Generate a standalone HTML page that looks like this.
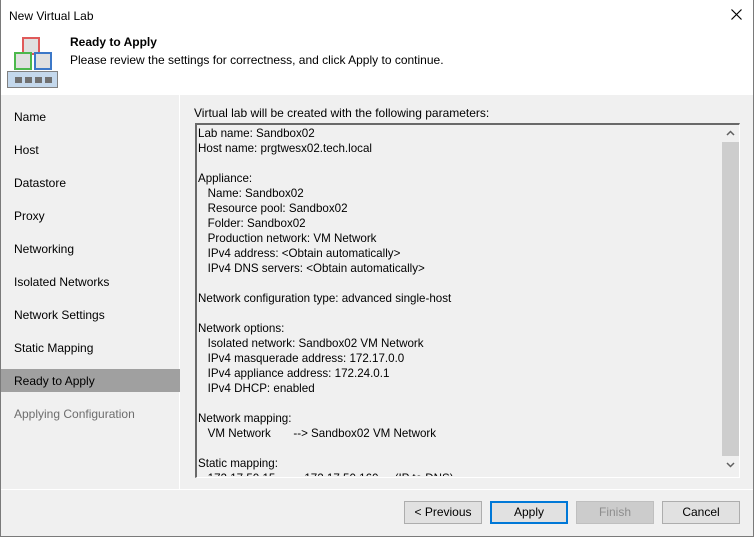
<!DOCTYPE html>
<html><head><style>
*{margin:0;padding:0;box-sizing:border-box}
body{width:754px;height:537px;background:#f0f0f0;font-family:"Liberation Sans",sans-serif;font-size:12px;color:#000;position:relative;overflow:hidden}
.win{position:absolute;left:0;top:0;width:754px;height:537px;border:1px solid #7a7a7a;border-top:none}
.abs{position:absolute;white-space:nowrap}
.hdr{position:absolute;left:1px;top:0;width:752px;height:95px;background:#fff}
.nav{position:absolute;left:1px;top:95px;width:179px;height:394px;background:#f0f0f0;border-right:1px solid #fff}
.sel{position:absolute;left:1px;top:369px;width:179px;height:23px;background:#a0a0a0}
.box{position:absolute;left:195px;top:123px;width:545px;height:355px;border:1px solid #fff;border-top:2px solid #696969;border-left:2px solid #696969;background:#f0f0f0}
.txt{position:absolute;left:1px;top:1px;line-height:15px;font-size:11.6px}
.btn{position:absolute;top:501px;width:78px;height:23px;border:1px solid #adadad;background:#e1e1e1;text-align:center;line-height:21px}
</style></head><body>
<div class="win"></div>
<div class="hdr"></div>
<div class="abs" style="left:9px;top:9px">New Virtual Lab</div>
<svg class="abs" style="left:731px;top:9px" width="11" height="11"><path d="M0.5 0.5L10.5 10.5M10.5 0.5L0.5 10.5" stroke="#000" stroke-width="1.2"/></svg>
<svg class="abs" style="left:7px;top:37px" width="52" height="52">
<rect x="16" y="1" width="16" height="16" fill="#e0e0e0" stroke="#e05a5a" stroke-width="2"/>
<rect x="8" y="16" width="16" height="16" fill="#e0e0e0" stroke="#4cb84c" stroke-width="2"/>
<rect x="28" y="16" width="16" height="16" fill="#e0e0e0" stroke="#3c78c8" stroke-width="2"/>
<rect x="0.5" y="34.5" width="50" height="16" fill="#c4d8ec" stroke="#808080"/>
<g fill="#707070"><rect x="8" y="40" width="7" height="6"/><rect x="18" y="40" width="7" height="6"/><rect x="28" y="40" width="7" height="6"/><rect x="38" y="40" width="7" height="6"/></g>
</svg>
<div class="abs" style="left:70px;top:35px;font-weight:bold">Ready to Apply</div>
<div class="abs" style="left:70px;top:53px">Please review the settings for correctness, and click Apply to continue.</div>
<div class="nav"></div>
<div class="sel"></div>
<div class="abs" style="left:14px;top:110px">Name</div>
<div class="abs" style="left:14px;top:143px">Host</div>
<div class="abs" style="left:14px;top:176px">Datastore</div>
<div class="abs" style="left:14px;top:209px">Proxy</div>
<div class="abs" style="left:14px;top:242px">Networking</div>
<div class="abs" style="left:14px;top:275px">Isolated Networks</div>
<div class="abs" style="left:14px;top:308px">Network Settings</div>
<div class="abs" style="left:14px;top:341px">Static Mapping</div>
<div class="abs" style="left:14px;top:374px">Ready to Apply</div>
<div class="abs" style="left:14px;top:407px;color:#6d6d6d">Applying Configuration</div>
<div class="abs" style="left:194px;top:106px">Virtual lab will be created with the following parameters:</div>
<div class="box"><div class="txt" style="height:350px;overflow:hidden;width:520px;white-space:pre">Lab name: Sandbox02
Host name: prgtwesx02.tech.local

Appliance:
   Name: Sandbox02
   Resource pool: Sandbox02
   Folder: Sandbox02
   Production network: VM Network
   IPv4 address: &lt;Obtain automatically&gt;
   IPv4 DNS servers: &lt;Obtain automatically&gt;

Network configuration type: advanced single-host

Network options:
   Isolated network: Sandbox02 VM Network
   IPv4 masquerade address: 172.17.0.0
   IPv4 appliance address: 172.24.0.1
   IPv4 DHCP: enabled

Network mapping:
   VM Network       --&gt; Sandbox02 VM Network

Static mapping:
   172.17.50.15         172.17.50.160     (IP to DNS)</div>
<div style="position:absolute;right:0;top:0;width:17px;height:352px;background:#f0f0f0">
<div style="position:absolute;left:0;top:17px;width:17px;height:314px;background:#cdcdcd"></div>
<svg style="position:absolute;left:4px;top:5px" width="9" height="6"><path d="M1 5L4.5 1.5L8 5" stroke="#606060" stroke-width="1.5" fill="none"/></svg>
<svg style="position:absolute;left:4px;top:337px" width="9" height="6"><path d="M1 1L4.5 4.5L8 1" stroke="#606060" stroke-width="1.5" fill="none"/></svg>
</div></div>
<div class="abs" style="left:1px;top:489px;width:752px;height:1px;background:#fff"></div>
<div class="btn" style="left:404px">&lt; Previous</div>
<div class="btn" style="left:490px;border:2px solid #0078d7;line-height:19px">Apply</div>
<div class="btn" style="left:576px;background:#cccccc;border-color:#bfbfbf;color:#8d8d8d">Finish</div>
<div class="btn" style="left:662px">Cancel</div>
</body></html>
